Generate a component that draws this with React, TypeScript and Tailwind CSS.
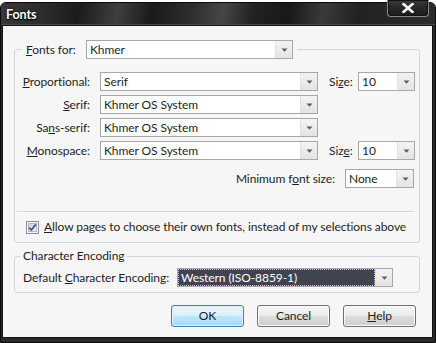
import React from "react";

function Arrow() {
  return (
    <div className="flex h-full w-[17px] items-center justify-center border-l border-[#e2e2e2] bg-[linear-gradient(#f3f3f3,#e4e4e4)]">
      <svg width="7" height="4" viewBox="0 0 7 4">
        <path d="M0.5 0.5H6.5L3.5 3.8Z" fill="#5c5c5c" />
      </svg>
    </div>
  );
}

function Select({
  value,
  className,
  selected = false,
}: {
  value: string;
  className: string;
  selected?: boolean;
}) {
  return (
    <div className={"flex h-[19px] shrink-0 border border-[#a7a7a7] bg-white " + className}>
      {selected ? (
        <div className="flex flex-1 items-center border border-dotted border-[#d9c97a] bg-[#3f4450] pl-[2px] text-white">
          {value}
        </div>
      ) : (
        <div className="flex flex-1 items-center pl-[3px]">{value}</div>
      )}
      <Arrow />
    </div>
  );
}

function Checkbox() {
  return (
    <svg width="13" height="13" viewBox="0 0 13 13" className="shrink-0">
      <defs>
        <linearGradient id="cbg" x1="0" y1="0" x2="1" y2="1">
          <stop offset="0" stopColor="#cdd3dc" />
          <stop offset="1" stopColor="#f4f6f8" />
        </linearGradient>
      </defs>
      <rect x="0.5" y="0.5" width="12" height="12" fill="#f4f4f4" stroke="#8e8f8f" />
      <rect x="2.5" y="2.5" width="8" height="8" fill="url(#cbg)" stroke="#b3b9c4" />
      <path d="M3.2 6.6 L5.4 9 L9.8 3.4" fill="none" stroke="#3c5493" strokeWidth="1.7" />
    </svg>
  );
}

function Button({
  children,
  primary = false,
}: {
  children: React.ReactNode;
  primary?: boolean;
}) {
  return (
    <div
      className={
        "flex h-[22px] w-[73px] items-center justify-center rounded-[3px] border " +
        (primary
          ? "border-[#3c7fb1] bg-[linear-gradient(#eaf6fd_0%,#d9f0fc_48%,#bee6fd_52%,#a7d9f5_100%)] shadow-[inset_0_0_0_1px_#dff3fe]"
          : "border-[#707070] bg-[linear-gradient(#f6f6f6_0%,#ebebeb_48%,#dddddd_52%,#cdcdcd_100%)] shadow-[inset_0_0_0_1px_#fbfbfb]")
      }
    >
      {children}
    </div>
  );
}

export default function App() {
  return (
    <div className="relative h-[343px] w-[436px] overflow-hidden bg-white text-[12px] leading-[16px] tracking-[-0.08px] text-[#1e1e1e] [font-family:Lato,'Noto_Sans',sans-serif]">
      <div className="mt-[2px] flex h-[341px] flex-col rounded-t-[6px] border border-[#0a0a0a] bg-[#2a2a2a]">
        {/* title bar */}
        <div className="flex h-[22px] shrink-0 items-center rounded-t-[5px] border-b border-[#4a4a4a] bg-[linear-gradient(100deg,#3a3a3a_0%,#2c2c2c_10%,#1c1c1c_18%,#3e3e3e_27%,#1a1a1a_35%,#2e2e2e_44%,#464646_51%,#222222_58%,#181818_66%,#3a3a3a_74%,#222222_82%,#2c2c2c_100%)] pl-[5px] pt-[2px]">
          <span className="text-[12.5px] font-bold text-white [text-shadow:0_0_3px_#000,0_1px_1px_#000]">
            Fonts
          </span>
        </div>
        {/* client */}
        <div className="ml-[1px] mr-[2px] flex h-[313px] shrink-0 flex-col border border-[#141414] bg-[#f6f6f6] pt-[14px]">
          <fieldset className="ml-[11px] mr-[12px] rounded-[3px] border border-[#d2d8dc] p-0">
            <legend className="ml-[7px] px-[4px]">
              <div className="flex h-[19px] items-center">
                <span className="w-[60px]">
                  <u>F</u>onts for:
                </span>
                <Select value="Khmer" className="w-[207px]" />
              </div>
            </legend>
            <div className="flex flex-col pr-[3px] pt-[13px] pb-[7px]">
              <div className="flex flex-col gap-[4px]">
                <div className="flex h-[19px] items-center">
                  <span className="w-[75px] text-right">
                    <u>P</u>roportional:
                  </span>
                  <Select value="Serif" className="ml-[10px] w-[218px]" />
                  <span className="ml-[11px] w-[29px]">
                    Si<u>z</u>e:
                  </span>
                  <Select value="10" className="w-[57px]" />
                </div>
                <div className="flex h-[19px] items-center">
                  <span className="w-[75px] text-right">
                    <u>S</u>erif:
                  </span>
                  <Select value="Khmer OS System" className="ml-[10px] w-[218px]" />
                </div>
                <div className="flex h-[19px] items-center">
                  <span className="w-[75px] text-right">
                    Sa<u>n</u>s-serif:
                  </span>
                  <Select value="Khmer OS System" className="ml-[10px] w-[218px]" />
                </div>
                <div className="flex h-[19px] items-center">
                  <span className="w-[75px] text-right">
                    <u>M</u>onospace:
                  </span>
                  <Select value="Khmer OS System" className="ml-[10px] w-[218px]" />
                  <span className="ml-[11px] w-[29px]">
                    Siz<u>e</u>:
                  </span>
                  <Select value="10" className="w-[57px]" />
                </div>
              </div>
              <div className="mt-[9px] flex h-[19px] items-center justify-end pr-[2px]">
                <span>
                  Minimum f<u>o</u>nt size:
                </span>
                <Select value="None" className="ml-[10px] w-[69px]" />
              </div>
              <div className="mx-[2px] mt-[23px] h-[2px] border-t border-[#d5d5d5] border-b border-b-white" />
              <div className="mt-[6px] flex h-[16px] items-center pl-[11px]">
                <Checkbox />
                <span className="ml-[5px]">
                  <u>A</u>llow pages to choose their own fonts, instead of my selections above
                </span>
              </div>
            </div>
          </fieldset>
          <fieldset className="ml-[11px] mr-[12px] mt-[5px] rounded-[3px] border border-[#d2d8dc] p-0">
            <legend className="ml-[5px] px-[3px] leading-[16px]">Character Encoding</legend>
            <div className="flex h-[19px] items-center pl-[8px] mt-[4px] mb-[5px]">
              <span className="w-[154px]">
                Default <u>C</u>haracter Encoding:
              </span>
              <Select value="Western (ISO-8859-1)" className="w-[216px]" selected />
            </div>
          </fieldset>
          <div className="mt-[12px] flex justify-end gap-[13px] pr-[16px]">
            <Button primary>OK</Button>
            <Button>Cancel</Button>
            <Button>
              <span>
                <u>H</u>elp
              </span>
            </Button>
          </div>
        </div>
      </div>
      {/* close button */}
      <div className="absolute left-[387px] top-0 flex h-[17px] w-[42px] items-center justify-center rounded-b-[4px] border border-t-0 border-[#8a8a8a] bg-[linear-gradient(#3c3c3c,#262626_50%,#1a1a1a)] shadow-[inset_0_0_0_1px_#111]">
        <svg width="12" height="10" viewBox="0 0 12 10">
          <path d="M1.5 1 L10.5 9 M10.5 1 L1.5 9" stroke="#f2f2f2" strokeWidth="2.6" strokeLinecap="square" />
        </svg>
      </div>
    </div>
  );
}
